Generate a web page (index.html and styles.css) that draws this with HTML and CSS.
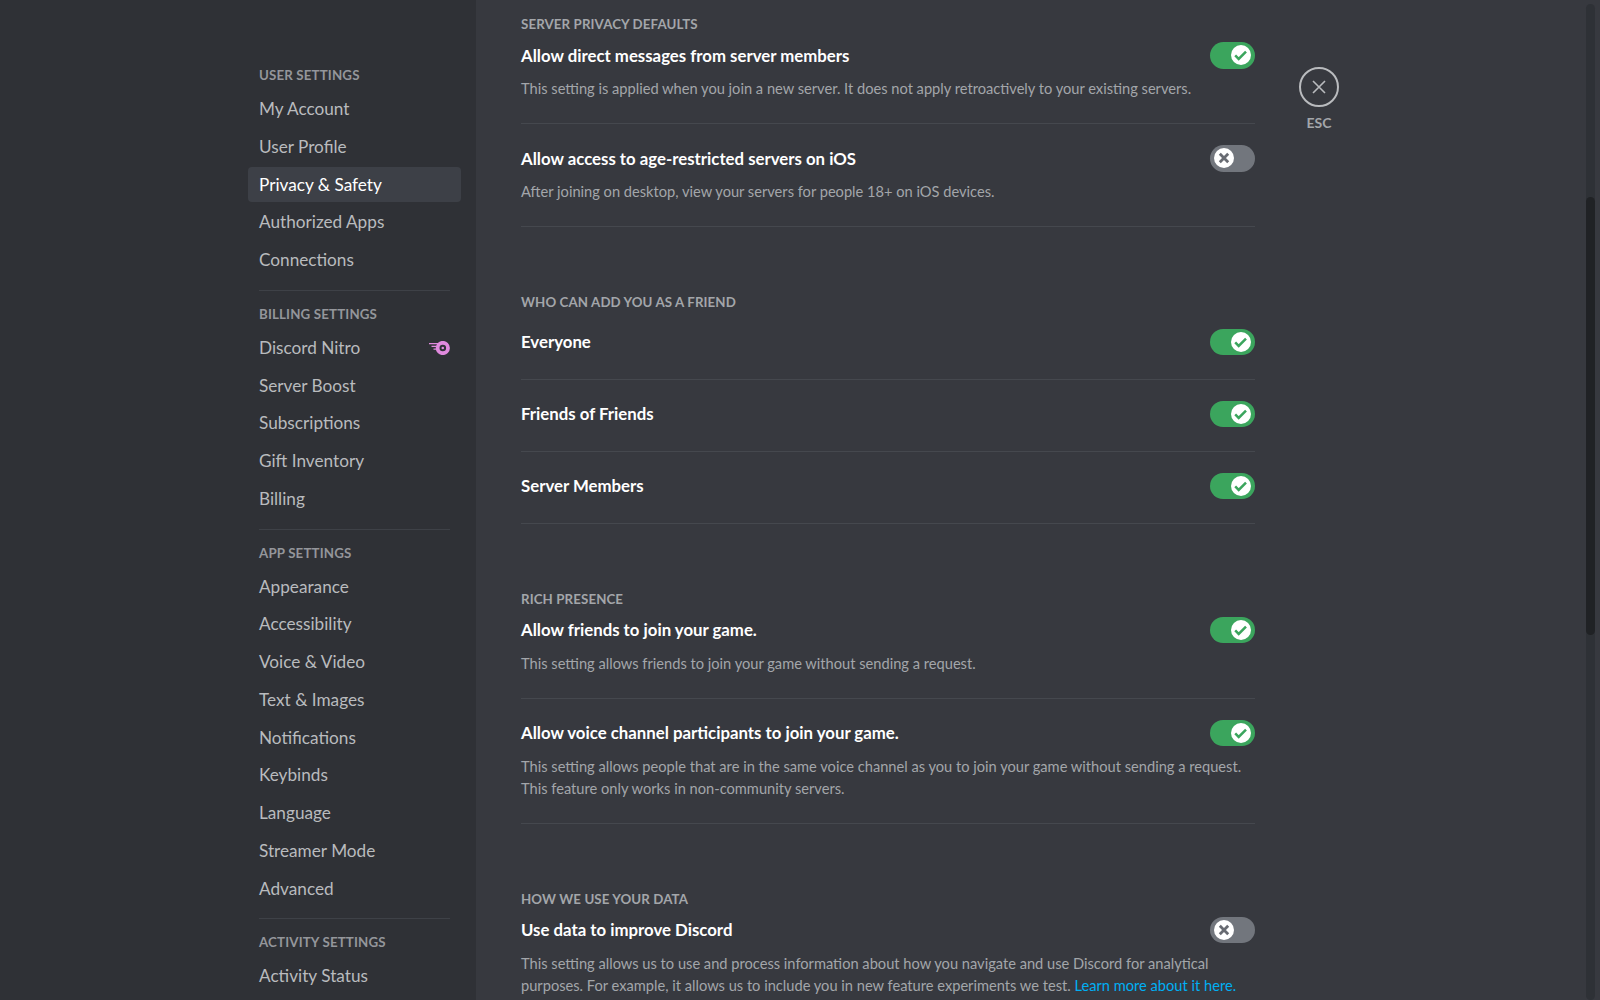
FILE: index.html
```html
<!DOCTYPE html>
<html lang="en">
<head>
    <meta charset="UTF-8">
    <title>Discord Settings</title>
    <link rel="stylesheet" href="styles.css">
</head>
<body>
    <svg class="defs" width="0" height="0">
        <symbol id="icon-check" viewBox="0 0 20 20">
            <path d="M4.2 10.4l3.5 3.5L15 6.6" fill="none" stroke="currentColor" stroke-width="2.5"/>
        </symbol>
        <symbol id="icon-cross" viewBox="0 0 20 20">
            <path d="M5.8 5.8l8.4 8.4M14.2 5.8l-8.4 8.4" fill="none" stroke="currentColor" stroke-width="2.8"/>
        </symbol>
    </svg>

    <nav class="sidebar">
        <div class="sidebar-inner">
            <h3 class="nav-header">User Settings</h3>
            <div class="nav-item">My Account</div>
            <div class="nav-item">User Profile</div>
            <div class="nav-item active">Privacy &amp; Safety</div>
            <div class="nav-item">Authorized Apps</div>
            <div class="nav-item">Connections</div>
            <div class="nav-sep"></div>

            <h3 class="nav-header">Billing Settings</h3>
            <div class="nav-item nav-item-icon">
                Discord Nitro
                <svg class="nitro-icon" width="22" height="14" viewBox="0 0 22 14">
                    <circle cx="14.8" cy="7" r="5.2" fill="none" stroke="#e08ade" stroke-width="3.8"/>
                    <circle cx="14.8" cy="7" r="1.3" fill="#e08ade"/>
                    <path d="M1 2.6h9M3.5 5.4h5M5.5 8.2h3" stroke="#e08ade" stroke-width="1.3"/>
                </svg>
            </div>
            <div class="nav-item">Server Boost</div>
            <div class="nav-item">Subscriptions</div>
            <div class="nav-item">Gift Inventory</div>
            <div class="nav-item">Billing</div>
            <div class="nav-sep"></div>

            <h3 class="nav-header">App Settings</h3>
            <div class="nav-item">Appearance</div>
            <div class="nav-item">Accessibility</div>
            <div class="nav-item">Voice &amp; Video</div>
            <div class="nav-item">Text &amp; Images</div>
            <div class="nav-item">Notifications</div>
            <div class="nav-item">Keybinds</div>
            <div class="nav-item">Language</div>
            <div class="nav-item">Streamer Mode</div>
            <div class="nav-item">Advanced</div>
            <div class="nav-sep"></div>

            <h3 class="nav-header">Activity Settings</h3>
            <div class="nav-item">Activity Status</div>
        </div>
    </nav>

    <main class="content">
        <div class="column">
            <section class="group">
                <h3 class="group-header">Server Privacy Defaults</h3>
                <div class="setting">
                    <div class="setting-row">
                        <div class="setting-title">Allow direct messages from server members</div>
                        <div class="switch on"><span class="knob"><svg width="20" height="20"><use href="#icon-check"/></svg></span></div>
                    </div>
                    <p class="setting-desc">This setting is applied when you join a new server. It does not apply retroactively to your existing servers.</p>
                </div>
                <div class="setting">
                    <div class="setting-row">
                        <div class="setting-title">Allow access to age-restricted servers on iOS</div>
                        <div class="switch off"><span class="knob"><svg width="20" height="20"><use href="#icon-cross"/></svg></span></div>
                    </div>
                    <p class="setting-desc">After joining on desktop, view your servers for people 18+ on iOS devices.</p>
                </div>
            </section>

            <section class="group">
                <h3 class="group-header header-spaced">Who can add you as a friend</h3>
                <div class="setting">
                    <div class="setting-row">
                        <div class="setting-title">Everyone</div>
                        <div class="switch on"><span class="knob"><svg width="20" height="20"><use href="#icon-check"/></svg></span></div>
                    </div>
                </div>
                <div class="setting">
                    <div class="setting-row">
                        <div class="setting-title">Friends of Friends</div>
                        <div class="switch on"><span class="knob"><svg width="20" height="20"><use href="#icon-check"/></svg></span></div>
                    </div>
                </div>
                <div class="setting">
                    <div class="setting-row">
                        <div class="setting-title">Server Members</div>
                        <div class="switch on"><span class="knob"><svg width="20" height="20"><use href="#icon-check"/></svg></span></div>
                    </div>
                </div>
            </section>

            <section class="group">
                <h3 class="group-header">Rich Presence</h3>
                <div class="setting">
                    <div class="setting-row">
                        <div class="setting-title">Allow friends to join your game.</div>
                        <div class="switch on"><span class="knob"><svg width="20" height="20"><use href="#icon-check"/></svg></span></div>
                    </div>
                    <p class="setting-desc">This setting allows friends to join your game without sending a request.</p>
                </div>
                <div class="setting">
                    <div class="setting-row">
                        <div class="setting-title">Allow voice channel participants to join your game.</div>
                        <div class="switch on"><span class="knob"><svg width="20" height="20"><use href="#icon-check"/></svg></span></div>
                    </div>
                    <p class="setting-desc">This setting allows people that are in the same voice channel as you to join your game without sending a request. This feature only works in non-community servers.</p>
                </div>
            </section>

            <section class="group">
                <h3 class="group-header">How we use your data</h3>
                <div class="setting">
                    <div class="setting-row">
                        <div class="setting-title">Use data to improve Discord</div>
                        <div class="switch off"><span class="knob"><svg width="20" height="20"><use href="#icon-cross"/></svg></span></div>
                    </div>
                    <p class="setting-desc">This setting allows us to use and process information about how you navigate and use Discord for analytical purposes. For example, it allows us to include you in new feature experiments we test. <a href="#">Learn more about it here.</a></p>
                </div>
            </section>
        </div>

        <div class="close">
            <div class="close-circle">
                <svg width="18" height="18" viewBox="0 0 18 18"><path d="M3 3l12 12M15 3L3 15" fill="none" stroke="#b9bbbe" stroke-width="1.6"/></svg>
            </div>
            <div class="close-label">ESC</div>
        </div>

        <div class="scrollbar"><div class="scrollbar-thumb"></div></div>
    </main>
</body>
</html>
```

FILE: styles.css
```css
* {
    box-sizing: border-box;
}
html, body {
    height: 100%;
}
body {
    display: flex;
    margin: 0;
    overflow: hidden;
    background-color: #37393f;
    font-family: 'Lato', 'Liberation Sans', sans-serif;
}
.defs {
    display: none;
}
h3, p {
    margin: 0;
}

/* sidebar */
.sidebar {
    flex: 0 0 476px;
    height: 100vh;
    overflow: hidden;
    background-color: #2f3136;
    padding: 67px 15px 0 0;
    display: flex;
    justify-content: flex-end;
}
.sidebar-inner {
    width: 213px;
}
.nav-header {
    padding: 0 11px;
    height: 16px;
    line-height: 16px;
    font-size: 13.3px;
    font-weight: 700;
    letter-spacing: 0.15px;
    text-transform: uppercase;
    color: #94969b;
    margin-bottom: 8px;
}
.nav-item {
    height: 35.76px;
    line-height: 35.76px;
    margin-bottom: 2px;
    padding: 0 11px;
    border-radius: 4px;
    font-size: 17.2px;
    color: #b9bbbe;
}
.nav-item.active {
    background-color: #3d4047;
    color: #fff;
}
.nav-item-icon {
    display: flex;
    align-items: center;
    justify-content: space-between;
}
.nav-sep {
    height: 1px;
    margin: 12px 11px 15px;
    background-color: #3e4147;
}

/* main column */
.content {
    flex: 1;
    position: relative;
    display: flex;
    height: 100vh;
    overflow: hidden;
    padding-left: 45px;
}
.column {
    width: 734px;
    padding-top: 16px;
}
.group {
    margin-bottom: 67px;
}
.group-header {
    height: 16px;
    line-height: 16px;
    font-size: 13.3px;
    font-weight: 700;
    letter-spacing: 0.1px;
    text-transform: uppercase;
    color: #a3a6aa;
    margin-bottom: 10px;
}
.header-spaced {
    margin-bottom: 18.5px;
}
.setting {
    padding-bottom: 23px;
    margin-bottom: 21px;
    border-bottom: 1px solid #45484e;
}
.setting-row {
    display: flex;
    align-items: center;
    justify-content: space-between;
    min-height: 27px;
}
.setting-title {
    padding-bottom: 1px;
    font-size: 16.8px;
    font-weight: 700;
    color: #fff;
}
.setting-desc {
    margin-top: 9px;
    font-size: 14.65px;
    line-height: 22px;
    color: #a3a6aa;
}
.setting-desc a {
    color: #00aff4;
    text-decoration: none;
}

/* toggle */
.switch {
    position: relative;
    flex: none;
    width: 45px;
    height: 26.7px;
    border-radius: 14px;
}
.switch.on {
    background-color: #3ba55d;
}
.switch.off {
    background-color: #72767d;
}
.knob {
    position: absolute;
    top: 3.3px;
    width: 20px;
    height: 20px;
    border-radius: 50%;
    background-color: #fff;
    display: flex;
    align-items: center;
    justify-content: center;
}
.switch.on .knob {
    right: 4px;
    color: #3ba55d;
}
.switch.off .knob {
    left: 3.5px;
    color: #686b72;
}

/* close button */
.close {
    margin: 67px 0 0 44px;
    width: 40px;
    display: flex;
    flex-direction: column;
    align-items: center;
}
.close-circle {
    width: 40px;
    height: 40px;
    border: 2px solid #b9bbbe;
    border-radius: 50%;
    display: flex;
    align-items: center;
    justify-content: center;
}
.close-label {
    margin-top: 7px;
    font-size: 14px;
    font-weight: 700;
    color: #a3a6aa;
}

/* scrollbar */
.scrollbar {
    position: absolute;
    top: 4px;
    right: 5px;
    bottom: 0;
    width: 9px;
    border-radius: 5px;
    background-color: #2e3136;
}
.scrollbar-thumb {
    position: absolute;
    top: 193px;
    left: 0;
    width: 9px;
    height: 438px;
    border-radius: 5px;
    background-color: #202225;
}
```
